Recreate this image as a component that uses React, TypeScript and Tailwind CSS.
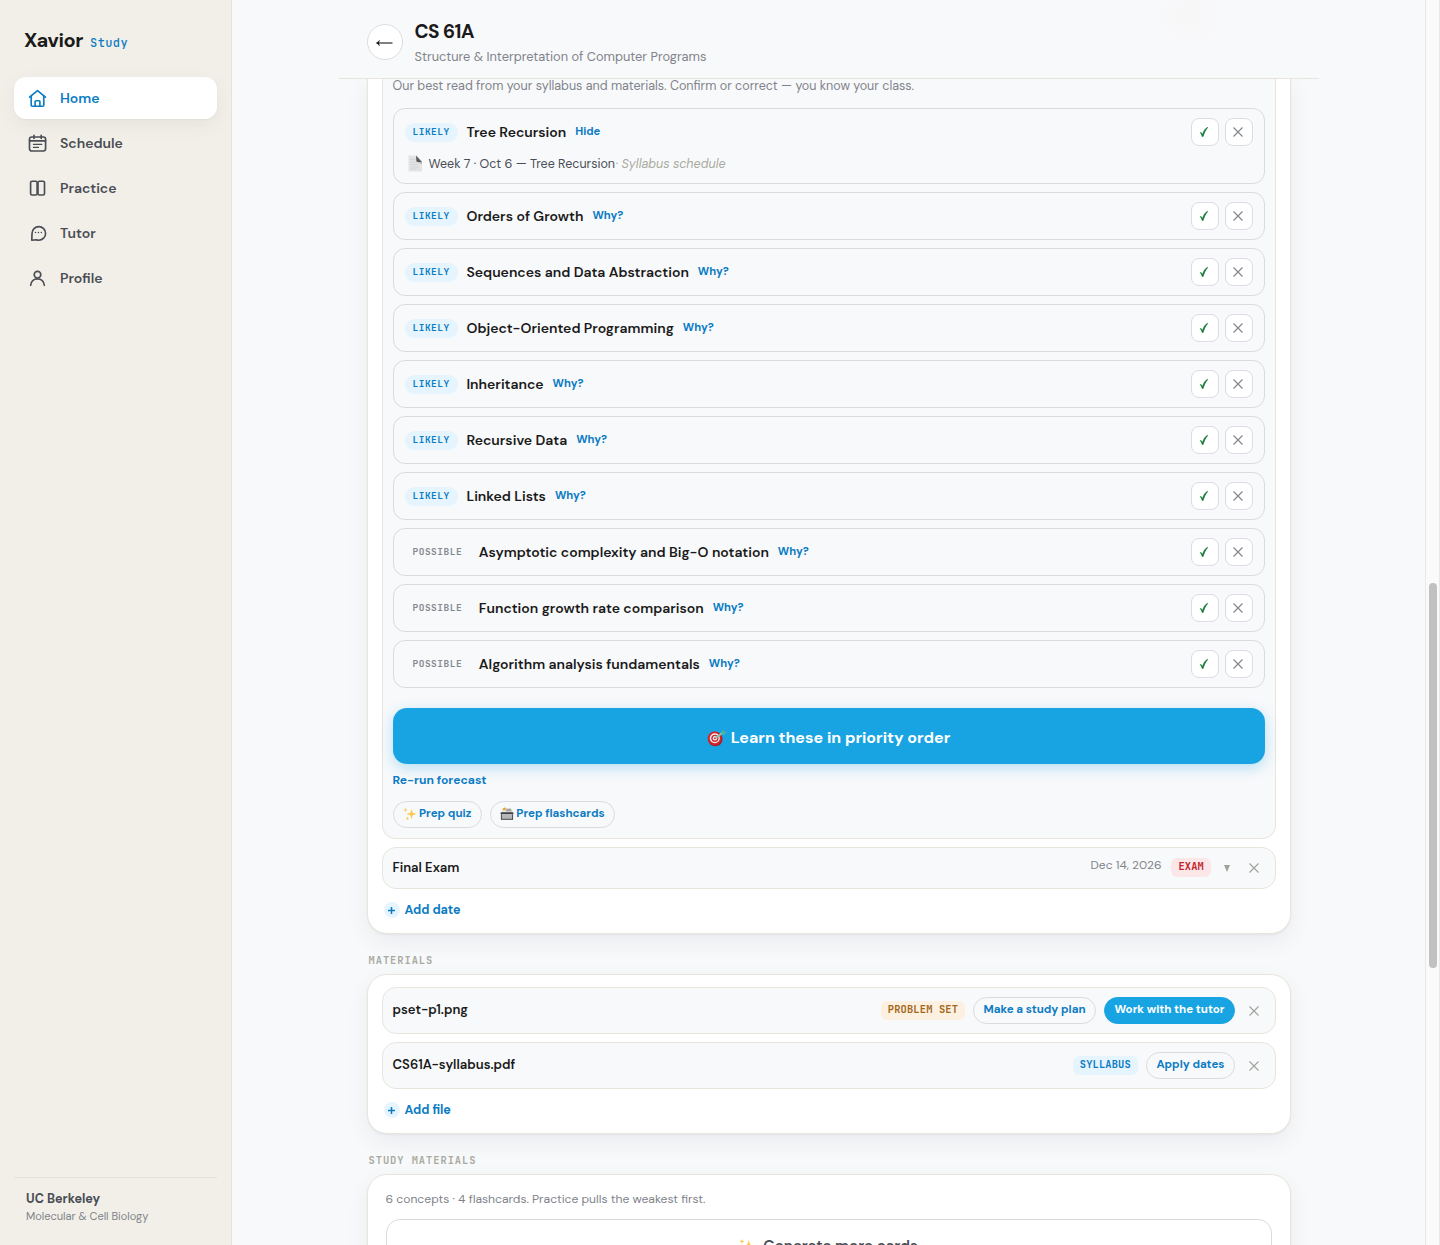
import React, { useState } from 'react';
import clsx from 'clsx';

interface Topic {
  name: string;
  level: 'likely' | 'possible';
  source?: { text: string; origin: string };
}

const topics: Topic[] = [
  {
    name: 'Tree Recursion',
    level: 'likely',
    source: { text: 'Week 7 · Oct 6 — Tree Recursion', origin: 'Syllabus schedule' },
  },
  { name: 'Orders of Growth', level: 'likely' },
  { name: 'Sequences and Data Abstraction', level: 'likely' },
  { name: 'Object-Oriented Programming', level: 'likely' },
  { name: 'Inheritance', level: 'likely' },
  { name: 'Recursive Data', level: 'likely' },
  { name: 'Linked Lists', level: 'likely' },
  { name: 'Asymptotic complexity and Big-O notation', level: 'possible' },
  { name: 'Function growth rate comparison', level: 'possible' },
  { name: 'Algorithm analysis fundamentals', level: 'possible' },
];

// Sidebar icons
const NavSvg = ({ children }: { children: React.ReactNode }) => (
  <svg className="size-5 shrink-0" viewBox="0 0 20 20" fill="none" stroke="currentColor" strokeWidth={1.65} strokeLinecap="round" strokeLinejoin="round">
    {children}
  </svg>
);

const HomeIcon = () => (
  <NavSvg>
    <path d="M1.6 9.2 9.5 2.7l7.900 6.500" />
    <path d="M3.2 8v9.2c0 .6.4 1 1 1h10.600c.6 0 1-.4 1-1V8" />
    <path d="M7.100 18v-4.400c0-.5.4-.9.9-.9h3c.5 0 .9.4.9.9V18" />
  </NavSvg>
);

const ScheduleIcon = () => (
  <NavSvg>
    <rect x="1.5" y="4" width="16.1" height="14" rx="2.2" />
    <path d="M1.5 7.800h16.100M6 2.200v3.300M13.200 2.200v3.300" />
    <path d="M5.500 11.400h8.200M5.500 14.400h4.900" strokeWidth={1.4} />
  </NavSvg>
);

const PracticeIcon = () => (
  <NavSvg>
    <rect x="2.6" y="3.2" width="6.5" height="13.8" rx="1.4" />
    <rect x="10" y="3.2" width="6.500" height="13.8" rx="1.4" />
  </NavSvg>
);

const TutorIcon = () => (
  <NavSvg>
    <path d="M3.800 17.200l.2-6.800a6.800 6.800 0 1 1 6.800 6.800 6.800 6.800 0 0 1-2.500-.5z" />
    <path d="M7.500 9.500h.1M10.400 9.500h.1M13.300 9.500h.1" strokeWidth={1.4} />
  </NavSvg>
);

const ProfileIcon = () => (
  <NavSvg>
    <circle cx="9.5" cy="6.7" r="3.3" />
    <path d="M2.700 17.300c.3-3.900 3-6.500 6.800-6.500s6.500 2.600 6.800 6.500" />
  </NavSvg>
);

const navItems = [
  { label: 'Home', icon: HomeIcon },
  { label: 'Schedule', icon: ScheduleIcon },
  { label: 'Practice', icon: PracticeIcon },
  { label: 'Tutor', icon: TutorIcon },
  { label: 'Profile', icon: ProfileIcon },
];

// Small pictograms
const PageIcon = () => (
  <svg className="-mt-0.5 h-[17px] w-4" viewBox="0 0 16 17">
    <path d="M.5.5h8L14 5.800v10.700H.5z" fill="#e3e3e4" />
    <path d="M2.500 4.500h5M2.500 7h8M2.500 9.500h8M2.500 12h8M2.500 14h6" stroke="#cfd0d2" strokeWidth=".7" />
    <path d="M8 .5 14.300 7.400 8.500 6.800z" fill="#55575b" />
    <path d="M9.500 7.200H14v2z" fill="#b5b6b9" />
  </svg>
);

const TargetIcon = () => (
  <svg className="h-[18px] w-5" viewBox="0 0 20 18">
    <circle cx="8.3" cy="10" r="7.3" fill="#a81d22" />
    <circle cx="7.6" cy="9.3" r="6.9" fill="#d3242b" />
    <circle cx="7.8" cy="9.3" r="5" fill="#f3eeee" />
    <circle cx="7.9" cy="9.3" r="3.6" fill="#cf2a31" />
    <circle cx="8" cy="9.3" r="2.2" fill="#f3eeee" />
    <circle cx="8" cy="9.3" r="1" fill="#cf2a31" />
    <path d="M8.500 9 16 3.600" stroke="#7cc9b4" strokeWidth="1.9" />
    <path d="M14.300 4.400 16.300.3l.8 2.200 2.900.7-3.500 2.800z" fill="#4fb3a0" />
  </svg>
);

const SparkIcon = ({ className }: { className: string }) => (
  <svg className={className} viewBox="0 0 14 14" fill="#fbc94a">
    <path d="M8.500 2l1.200 3.700 3.800 1.300-3.800 1.300L8.500 12 7.300 8.300 3.500 7l3.800-1.300z" />
    <path d="M2.600.8l.6 1.600 1.600.6-1.600.6-.6 1.600L2 3.600.4 3 2 2.400z" />
    <path d="M4.300 9.500l.5 1.500 1.500.5-1.500.5-.5 1.500-.5-1.500-1.500-.5 1.500-.5z" />
  </svg>
);

const CardIndexIcon = () => (
  <svg className="h-[13px] w-[14px]" viewBox="0 0 14 13">
    <path d="M3 1.500h8.500L13 5.500H1.500z" fill="#e6e4df" />
    <path d="M2.500 1.700 5 .3l1.500 1.500L5 3.300H3z" fill="#e8a83c" />
    <path d="M6.500 2.300H11M6 3.800h5.500" stroke="#77797c" strokeWidth=".8" />
    <rect x=".6" y="5.3" width="12.8" height="2" rx=".6" fill="#3c3e41" />
    <path d="M1.600 7.300h10.800l.5 5H1.100z" fill="#b4b6b8" />
    <path d="M1.400 7.300v5M12.600 7.300v5M1 12.300h12" stroke="#47494c" strokeWidth="1" />
  </svg>
);

const CheckMark = () => (
  <svg className="-ml-px h-3 w-2.5" viewBox="0 0 10 12" fill="#1d7f3f">
    <path d="M.8 6.400c1.100-.5 2 .1 2.500 1.500C4.400 4.900 6.100 2.200 8.400.9l.7.5C6.900 4 5.300 7.200 4.500 10.600l-1.500.5C2.500 9 1.900 7.700.8 6.400z" />
  </svg>
);

const Cross = ({ className }: { className: string }) => (
  <svg className={className} viewBox="0 0 10 10" fill="none" stroke="currentColor" strokeWidth={1.1}>
    <path d="M.5.5l9 9M9.500.5l-9 9" />
  </svg>
);

const IconButton = ({ children }: { children: React.ReactNode }) => (
  <button className="flex size-7 items-center justify-center rounded-lg border border-[#dcdde1] bg-white text-[#80838a]">
    {children}
  </button>
);

const TopicRow = ({ topic, open, onToggle }: { topic: Topic; open: boolean; onToggle: () => void }) => (
  <div className="rounded-xl border border-[#dadbdf] px-[11px] py-[9px]">
    <div className="flex h-7 items-center">
      <span
        className={clsx(
          "flex h-[19px] items-center rounded-full px-2 font-['JetBrains_Mono','DejaVu_Sans_Mono',monospace] text-[9.5px] tracking-[0.5px]",
          topic.level === 'likely' ? 'bg-[#e6f5fd] font-bold text-[#0b7cc4]' : 'font-semibold text-[#85888f]',
        )}
      >
        {topic.level.toUpperCase()}
      </span>
      <span className="ml-[8.75px] text-sm font-semibold text-[#1a1a1a]">{topic.name}</span>
      <button onClick={onToggle} className="mb-0.5 ml-[9px] text-[11.2px] font-bold text-[#0b7cc4]">
        {open ? 'Hide' : 'Why?'}
      </button>
      <div className="ml-auto flex gap-1.5">
        <IconButton>
          <CheckMark />
        </IconButton>
        <IconButton>
          <Cross className="-ml-px size-2.5" />
        </IconButton>
      </div>
    </div>
    {open && topic.source && (
      <div className="flex h-7 items-center pt-2 pl-[3px] text-[12.5px] text-[#4a4d55]">
        <PageIcon />
        <span className="ml-[5px]">{topic.source.text}</span>
        <span className="ml-[0.5px] text-[#a9aba0] italic">· {topic.source.origin}</span>
      </div>
    )}
  </div>
);

const Tag = ({ className, children }: { className: string; children: React.ReactNode }) => (
  <span
    className={clsx(
      "flex h-[19px] items-center rounded-md px-[7px] pb-0.5 font-['JetBrains_Mono','DejaVu_Sans_Mono',monospace] text-[10.4px] font-semibold tracking-[0.15px]",
      className,
    )}
  >
    {children}
  </span>
);

const Pill = ({ primary, children }: { primary?: boolean; children: React.ReactNode }) => (
  <button
    className={clsx(
      'flex h-[27px] items-center rounded-full border px-[9.5px] pb-0.5 text-[11.52px] font-bold',
      primary ? 'border-[#18a4e3] bg-[#18a4e3] text-white' : 'border-[#dadbdf] text-[#0b7cc4]',
    )}
  >
    {children}
  </button>
);

const Card = ({ className, children }: { className?: string; children: React.ReactNode }) => (
  <section className={clsx('border border-[#e8e6dc] bg-white shadow-[0_1px_2px_rgba(20,20,30,0.05),0_8px_24px_rgba(20,20,30,0.06)]', className)}>
    {children}
  </section>
);

const SectionLabel = ({ children }: { children: React.ReactNode }) => (
  <h2 className="mt-5 mb-[7px] pl-0.5 font-['JetBrains_Mono','DejaVu_Sans_Mono',monospace] text-[10.4px] leading-[13px] font-semibold tracking-[0.96px] text-[#a9aba0]">
    {children}
  </h2>
);

const AddButton = ({ label }: { label: string }) => (
  <button className="mt-[13px] ml-0.5 flex items-center gap-[5px] text-[12.5px] leading-4 font-bold text-[#0b7cc4]">
    <span className="flex size-4 items-center justify-center rounded-full bg-[#e6f5fd]">
      <svg className="-ml-px size-[7px]" viewBox="0 0 7 7" stroke="currentColor" strokeWidth={1.5}>
        <path d="M3.500 0v7M0 3.500h7" />
      </svg>
    </span>
    {label}
  </button>
);

const Sidebar = () => (
  <aside className="flex w-[232px] shrink-0 flex-col border-r border-[#e5e3da] bg-[#f1efe7] px-3.5">
    <div className="mt-[26px] flex items-baseline gap-[7px] pl-2.5">
      <span className="text-xl leading-7 font-bold tracking-[-0.4px] text-[#1a1a1a]">Xavior</span>
      <span className="font-['JetBrains_Mono','DejaVu_Sans_Mono',monospace] text-xs font-medium tracking-[0.4px] text-[#0b7cc4]">Study</span>
    </div>
    <nav className="mt-[23px] flex flex-col gap-[3px]">
      {navItems.map(({ label, icon: Icon }, i) => (
        <a
          key={label}
          className={clsx(
            'flex h-[42px] items-center gap-3 rounded-xl px-3.5 text-sm font-semibold',
            i === 0
              ? 'bg-white text-[#0b7cc4] shadow-[0_1px_2px_rgba(20,20,30,0.04),0_6px_20px_rgba(20,20,30,0.05)]'
              : 'text-[#4a4d55]',
          )}
        >
          <Icon />
          {label}
        </a>
      ))}
    </nav>
    <div className="mt-auto flex h-[68px] flex-col border-t border-[#e5e3da] px-3 pt-3">
      <span className="text-[12.6px] leading-[18px] font-bold text-[#4a4d55]">UC Berkeley</span>
      <span className="text-[11px] leading-[17px] text-[#80838a]">Molecular &amp; Cell Biology</span>
    </div>
  </aside>
);

export default function App() {
  const [openTopic, setOpenTopic] = useState<string | null>('Tree Recursion');

  return (
    <div className="flex h-[1245px] w-full overflow-hidden bg-[#f8f9fb] font-['DM_Sans','Inter',sans-serif]">
      <Sidebar />

      <main className="flex min-w-0 flex-1 flex-col items-center overflow-hidden">
        <header className="relative z-10 flex h-[79px] w-[980px] shrink-0 items-center border-b border-[#e8e6dc] bg-[#f8f9fb] bg-[radial-gradient(circle_at_852px_15px,rgba(240,120,80,0.022),transparent_36px)] px-7">
          <button className="mt-[5px] flex size-9 items-center justify-center rounded-full border border-[#dcdde1] bg-white text-[#1a1a1a]">
            <svg className="mt-0.5 -ml-0.5 h-3 w-[18px]" viewBox="0 0 18 12">
              <path d="M2 6h15.500" stroke="currentColor" strokeWidth="1.1" />
              <path d="M.6 6C2.200 5.300 3.500 4.200 4.400 2.900l.4.3C4.300 4.200 4 5.100 4 6s.3 1.800.8 2.800l-.4.3C3.500 7.800 2.200 6.700.6 6z" fill="currentColor" />
            </svg>
          </button>
          <div className="ml-3 pt-1.5">
            <h1 className="text-[19px] leading-[25px] font-bold tracking-[-0.5px] text-[#1a1a1a]">CS 61A</h1>
            <p className="mt-1 text-[12.8px] leading-[18px] text-[#80838a]">Structure &amp; Interpretation of Computer Programs</p>
          </div>
        </header>

        <div className="w-[924px]">
          {/* Upcoming dates */}
          <Card className="rounded-b-[20px] border-t-0 px-3.5 pb-[15px]">
            <div className="rounded-b-[14px] border border-t-0 border-[#e8e6dc] bg-[#f8f9fb] px-2.5 pb-2.5">
              <p className="-mt-0.5 mb-[13px] text-[12.54px] leading-[18px] text-[#80838a]">
                Our best read from your syllabus and materials. Confirm or correct — you know your class.
              </p>
              <div className="flex flex-col gap-2">
                {topics.map((topic) => (
                  <TopicRow
                    key={topic.name}
                    topic={topic}
                    open={openTopic === topic.name}
                    onToggle={() => setOpenTopic(openTopic === topic.name ? null : topic.name)}
                  />
                ))}
              </div>
              <button className="mt-5 flex h-14 w-full items-center justify-center gap-1 rounded-[14px] bg-[#18a4e3] pt-[3px] text-base font-bold text-white shadow-[0_4px_14px_rgba(24,164,227,0.3)]">
                <TargetIcon />
                Learn these in priority order
              </button>
              <button className="mt-[7px] block text-[12.1px] leading-[18px] font-bold text-[#0b7cc4]">Re-run forecast</button>
              <div className="mt-3 flex gap-2">
                <Pill>
                  <SparkIcon className="mr-0.5 size-3.5" />
                  Prep quiz
                </Pill>
                <Pill>
                  <span className="mr-0.5">
                    <CardIndexIcon />
                  </span>
                  Prep flashcards
                </Pill>
              </div>
            </div>

            <div className="mt-2 flex h-[42px] items-center rounded-[14px] border border-[#e8e6dc] bg-[#f8f9fb] px-2.5">
              <span className="text-[13.1px] font-semibold text-[#1a1a1a]">Final Exam</span>
              <span className="mr-2.5 ml-auto pb-1.5 text-xs text-[#80838a]">Dec 14, 2026</span>
              <Tag className="mb-px bg-[#fce7e8] text-[#c0232a]">EXAM</Tag>
              <svg className="mx-[13px] h-[7px] w-1.5" viewBox="0 0 6 7" fill="#a0a29a">
                <path d="M0 0h6L3 7z" />
              </svg>
              <Cross className="mr-1.5 ml-[5.5px] size-2.5 text-[#a0a29a]" />
            </div>
            <AddButton label="Add date" />
          </Card>

          <SectionLabel>MATERIALS</SectionLabel>
          <Card className="rounded-[20px] px-3.5 pt-3 pb-[15px]">
            <div className="flex h-[47px] items-center rounded-[14px] border border-[#e8e6dc] bg-[#f8f9fb] px-2.5">
              <span className="mr-auto pb-0.5 text-[13.1px] font-semibold text-[#1a1a1a]">pset-p1.png</span>
              <div className="flex items-center gap-2">
                <Tag className="bg-[#fcf1e0] text-[#a3671a]">PROBLEM SET</Tag>
                <Pill>Make a study plan</Pill>
                <Pill primary>Work with the tutor</Pill>
              </div>
              <Cross className="mr-1.5 ml-[13.5px] size-2.5 text-[#a0a29a]" />
            </div>
            <div className="mt-2 flex h-[47px] items-center rounded-[14px] border border-[#e8e6dc] bg-[#f8f9fb] px-2.5">
              <span className="mr-auto pb-0.5 text-[13.1px] font-semibold text-[#1a1a1a]">CS61A-syllabus.pdf</span>
              <div className="flex items-center gap-2">
                <Tag className="bg-[#e6f5fd] text-[#0b7cc4]">SYLLABUS</Tag>
                <Pill>Apply dates</Pill>
              </div>
              <Cross className="mr-1.5 ml-[13.5px] size-2.5 text-[#a0a29a]" />
            </div>
            <AddButton label="Add file" />
          </Card>

          <SectionLabel>STUDY MATERIALS</SectionLabel>
          <Card className="h-40 rounded-[20px] px-[18px] pt-[15px]">
            <p className="text-[12.1px] leading-[18px] text-[#80838a]">6 concepts · 4 flashcards. Practice pulls the weakest first.</p>
            <button className="mt-[11px] flex h-[54px] w-full items-center justify-center gap-2 rounded-[14px] border border-[#dadbdf] bg-white text-[15.1px] font-semibold text-[#4a4d55]">
              <SparkIcon className="size-4" />
              Generate more cards
            </button>
          </Card>
        </div>
      </main>

      {/* Scrollbar track */}
      <div className="w-[15px] shrink-0 border-x border-[#e8e8e8] bg-[#fafafa] pt-[583px] pl-[3px]">
        <div className="h-[385px] w-2 rounded-full bg-[#c1c1c1]" />
      </div>
    </div>
  );
}
